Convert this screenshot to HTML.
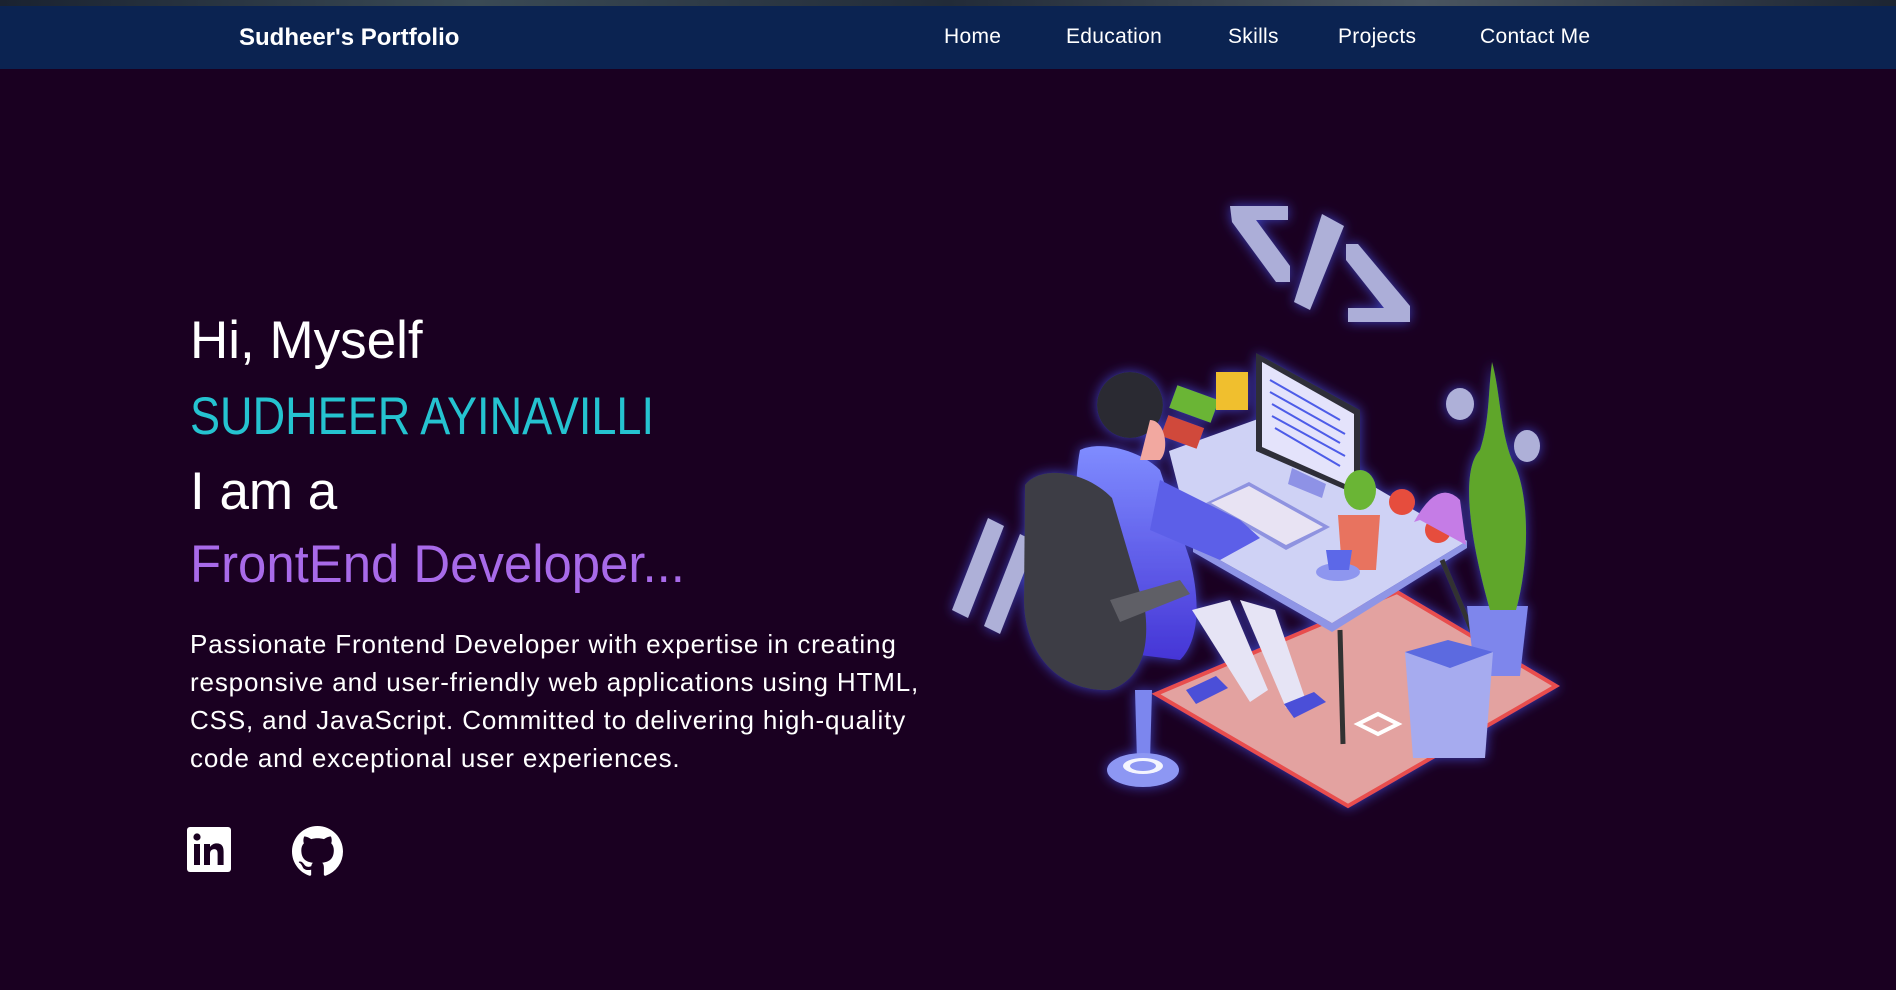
<!DOCTYPE html>
<html><head><meta charset="utf-8"><style>
*{margin:0;padding:0;box-sizing:border-box}
body{width:1896px;height:990px;overflow:hidden;background:#1a0021;font-family:"Liberation Sans",sans-serif;color:#fff;position:relative}
.top{position:absolute;left:0;top:0;width:1896px;height:6px;background:linear-gradient(90deg,#1a2230,#3a4a55,#222b38,#4a5560,#1d2532)}
nav{position:absolute;left:0;top:6px;width:1896px;height:63px;background:#0b2351}
.logo{position:absolute;left:239px;top:18px;font-size:24px;font-weight:bold;letter-spacing:0px}
.nav a{position:absolute;top:19px;font-size:21px;color:#fff;text-decoration:none;letter-spacing:0.3px}
.h{position:absolute;left:190px;font-size:53px;white-space:nowrap;line-height:1;transform-origin:left top}
p{position:absolute;left:190px;top:625px;font-size:26px;line-height:38px;white-space:nowrap;letter-spacing:0.85px}
</style></head><body>
<div class="top"></div>
<nav><div class="logo">Sudheer's Portfolio</div>
<div class="nav"><a style="left:944px">Home</a><a style="left:1066px">Education</a><a style="left:1228px">Skills</a><a style="left:1338px">Projects</a><a style="left:1480px">Contact Me</a></div></nav>
<div class="h" style="top:314px">Hi, Myself</div>
<div class="h" style="top:390px;color:#25c3d0;transform:scaleX(0.85)">SUDHEER AYINAVILLI</div>
<div class="h" style="top:465px">I am a</div>
<div class="h" style="top:538px;color:#a86ae9;transform:scaleX(0.96)">FrontEnd Developer...</div>
<p>Passionate Frontend Developer with expertise in creating<br>responsive and user-friendly web applications using HTML,<br>CSS, and JavaScript. Committed to delivering high-quality<br>code and exceptional user experiences.</p>
<svg style="position:absolute;left:185px;top:826px" width="48" height="48" viewBox="0 0 48 48">
<rect x="2" y="1" width="44" height="45" rx="3" fill="#fff"/>
<rect x="9" y="18" width="6" height="21" fill="#1a0021"/><circle cx="12" cy="11" r="3.6" fill="#1a0021"/>
<path d="M19 18h6v3c1.5-2.3 3.8-3.6 6.8-3.6 5 0 6.8 3.2 6.8 8.2V39h-6V27.5c0-2.6-.8-4.4-3.3-4.4-2.6 0-4.3 1.8-4.3 4.6V39h-6z" fill="#1a0021"/></svg>
<svg style="position:absolute;left:292px;top:826px" width="51" height="51" viewBox="0 0 16 16"><path fill="#fff" d="M8 0C3.58 0 0 3.58 0 8c0 3.54 2.290 6.530 5.470 7.590.4.07.55-.17.55-.38 0-.19-.01-.82-.01-1.490-2.010.37-2.530-.49-2.690-.94-.09-.23-.48-.94-.82-1.130-.28-.15-.68-.52-.01-.53.63-.01 1.080.58 1.230.82.72 1.210 1.870.87 2.330.66.07-.52.28-.87.51-1.070-1.780-.2-3.640-.89-3.640-3.950 0-.87.31-1.590.82-2.150-.08-.2-.36-1.020.08-2.120 0 0 .67-.21 2.200.82.64-.18 1.320-.27 2-.27.68 0 1.360.09 2 .27 1.530-1.040 2.200-.82 2.200-.82.44 1.100.16 1.920.08 2.120.51.56.82 1.270.82 2.150 0 3.070-1.870 3.750-3.650 3.950.29.25.54.73.54 1.480 0 1.070-.01 1.930-.01 2.200 0 .21.15.46.55.38A8.013 8.013 0 0016 8c0-4.420-3.580-8-8-8z"/></svg>
<svg style="position:absolute;left:0;top:0" width="1896" height="990">
<defs><filter id="g" x="-30%" y="-30%" width="160%" height="160%"><feGaussianBlur stdDeviation="6" result="b"/><feFlood flood-color="#4a5cff" flood-opacity="0.7"/><feComposite in2="b" operator="in"/><feMerge><feMergeNode/><feMergeNode in="SourceGraphic"/></feMerge></filter>
<linearGradient id="bl" x1="0" y1="0" x2="0" y2="1"><stop offset="0" stop-color="#7f8cff"/><stop offset="1" stop-color="#4535d6"/></linearGradient></defs>
<g filter="url(#g)">
<polygon points="1230,206 1288,206 1288,220 1256,220 1290,266 1290,282 1276,282 1232,222" fill="#acaed8"/>
<polygon points="1322,214 1344,226 1310,310 1294,302" fill="#aeb0d8"/>
<polygon points="1346,244 1358,244 1410,306 1410,322 1348,322 1348,308 1384,308 1346,260" fill="#acaed8"/>
<polygon points="952,610 988,518 1004,526 968,618" fill="#aeb0d8"/>
<polygon points="984,626 1020,534 1036,542 1000,634" fill="#aeb0d8"/>
<circle cx="1040" cy="610" r="13" fill="#aeb0d8"/>
<ellipse cx="1460" cy="404" rx="14" ry="16" fill="#aeb0d8"/><ellipse cx="1527" cy="446" rx="13" ry="16" fill="#aeb0d8"/>
<polygon points="1156,694 1397,592 1556,686 1348,806" fill="#e3a2a0" stroke="#e84d4d" stroke-width="4"/>
<polygon points="1169,451 1258,419 1467,541 1332,623 1193,545" fill="#cfd2f5"/>
<polygon points="1193,545 1332,623 1467,541 1467,548 1332,632 1193,552" fill="#8f95e6"/>
<line x1="1340" y1="630" x2="1343" y2="744" stroke="#333" stroke-width="5"/>
<line x1="1442" y1="560" x2="1480" y2="650" stroke="#333" stroke-width="5"/>
<polygon points="1256,353 1360,410 1360,496 1256,451" fill="#2d2d38"/>
<polygon points="1262,362 1354,414 1354,488 1262,447" fill="#e4e3fb"/>
<g stroke="#4d5be8" stroke-width="2"><line x1="1270" y1="380" x2="1340" y2="420"/><line x1="1270" y1="392" x2="1345" y2="434"/><line x1="1272" y1="404" x2="1340" y2="443"/><line x1="1272" y1="416" x2="1345" y2="456"/><line x1="1275" y1="428" x2="1340" y2="466"/></g>
<polygon points="1292,468 1326,484 1322,498 1288,484" fill="#8e92e6"/>
<polygon points="1206,503 1249,482 1330,527 1286,550" fill="#8f93e0"/>
<polygon points="1211,503 1249,486 1323,527 1286,545" fill="#e8e3f3"/>
<rect x="1164" y="420" width="38" height="22" fill="#d04a3a" transform="rotate(20 1180 430)"/>
<rect x="1172" y="392" width="44" height="24" fill="#6ab534" transform="rotate(20 1194 404)"/>
<rect x="1216" y="372" width="32" height="38" fill="#f0bf2f"/>
<path d="M1338,515 L1380,515 L1376,570 L1342,570 Z" fill="#e8735f"/>
<ellipse cx="1360" cy="490" rx="16" ry="20" fill="#6ab534"/>
<ellipse cx="1338" cy="572" rx="22" ry="9" fill="#8e96ef"/><path d="M1326,550 h26 l-3,20 h-20z" fill="#5c68e8"/>
<circle cx="1402" cy="502" r="13" fill="#e64d3c"/><circle cx="1438" cy="530" r="13" fill="#e64d3c"/>
<path d="M1414,522 Q1438,478 1460,500 L1466,545 L1420,520 Z" fill="#c57ce6"/>
<path d="M1467,606 L1528,606 L1520,676 L1475,676 Z" fill="#7e86ec"/>
<path d="M1490,610 C1470,540 1460,470 1480,450 C1490,420 1488,390 1492,362 C1500,390 1500,430 1512,460 C1530,490 1530,560 1516,610 Z" fill="#5fa629"/>
<path d="M1405,652 L1493,652 L1485,758 L1413,758 Z" fill="#a6abef"/><polygon points="1405,652 1448,640 1493,652 1450,668" fill="#5b6ae0"/>
<path d="M1080,450 C1100,440 1140,450 1160,470 L1190,560 C1200,600 1200,640 1180,660 L1100,650 C1080,600 1070,500 1080,450 Z" fill="url(#bl)"/>
<path d="M1160,480 L1240,520 L1260,538 L1220,560 L1150,530 Z" fill="#5b5fe8"/>
<path d="M1192,610 L1230,600 L1268,690 L1250,702 Z" fill="#e6e4f5"/>
<path d="M1240,600 L1275,610 L1305,698 L1286,708 Z" fill="#e6e4f5"/>
<path d="M1186,690 l30,-14 l12,12 l-32,16 z" fill="#4b4fd8"/><path d="M1284,704 l30,-12 l12,10 l-32,16 z" fill="#4b4fd8"/>
<circle cx="1130" cy="405" r="33" fill="#2c2c33"/>
<path d="M1150,420 C1165,420 1170,450 1160,460 L1140,460 Z" fill="#f2a8a0"/>
<path d="M1025,485 C1040,465 1085,470 1112,498 L1145,610 C1150,650 1140,680 1110,690 C1055,692 1024,650 1024,600 Z" fill="#3d3d45"/>
<path d="M1110,600 L1180,580 L1190,594 L1120,622 Z" fill="#5e5e66"/>
<path d="M1135,690 L1152,690 L1150,760 L1137,760 Z" fill="#7b86ee"/>
<ellipse cx="1143" cy="770" rx="36" ry="17" fill="#8d97f3"/><ellipse cx="1143" cy="766" rx="20" ry="8" fill="#fff" opacity="0.9"/><ellipse cx="1143" cy="766" rx="13" ry="5" fill="#8d97f3"/>
<path d="M1358,724 l20,-10 l20,10 l-20,10 z" fill="none" stroke="#fff" stroke-width="4"/>
</g>
</svg>
</body></html>
